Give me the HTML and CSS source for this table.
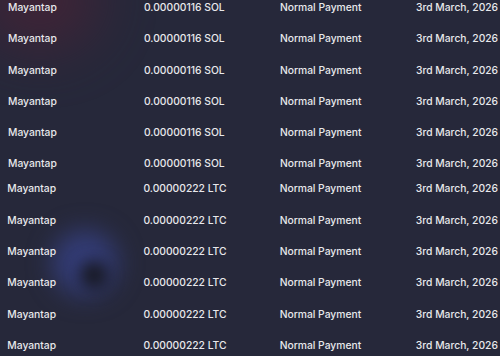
FILE: index.html
```html
<!doctype html>
<html lang="en">
  <head>
    <meta charset="UTF-8">
    <meta name="viewport" content="width=device-width, initial-scale=1.0">
    <title>Payments</title>
    <link rel="stylesheet" href="styles.css">
  </head>
  <body>
    <div class="glow glow-red"></div>
    <div class="glow glow-blue"></div>
    <div class="glow glow-dark"></div>

    <main class="history">
      <ul class="tx-list">
        <li class="tx"><span>Mayantap</span><span>0.00000116 SOL</span><span>Normal Payment</span><span>3rd March, 2026</span></li>
        <li class="tx"><span>Mayantap</span><span>0.00000116 SOL</span><span>Normal Payment</span><span>3rd March, 2026</span></li>
        <li class="tx"><span>Mayantap</span><span>0.00000116 SOL</span><span>Normal Payment</span><span>3rd March, 2026</span></li>
        <li class="tx"><span>Mayantap</span><span>0.00000116 SOL</span><span>Normal Payment</span><span>3rd March, 2026</span></li>
        <li class="tx"><span>Mayantap</span><span>0.00000116 SOL</span><span>Normal Payment</span><span>3rd March, 2026</span></li>
        <li class="tx"><span>Mayantap</span><span>0.00000116 SOL</span><span>Normal Payment</span><span>3rd March, 2026</span></li>
      </ul>

      <ul class="tx-list tx-list-ltc">
        <li class="tx"><span>Mayantap</span><span>0.00000222 LTC</span><span>Normal Payment</span><span>3rd March, 2026</span></li>
        <li class="tx"><span>Mayantap</span><span>0.00000222 LTC</span><span>Normal Payment</span><span>3rd March, 2026</span></li>
        <li class="tx"><span>Mayantap</span><span>0.00000222 LTC</span><span>Normal Payment</span><span>3rd March, 2026</span></li>
        <li class="tx"><span>Mayantap</span><span>0.00000222 LTC</span><span>Normal Payment</span><span>3rd March, 2026</span></li>
        <li class="tx"><span>Mayantap</span><span>0.00000222 LTC</span><span>Normal Payment</span><span>3rd March, 2026</span></li>
        <li class="tx"><span>Mayantap</span><span>0.00000222 LTC</span><span>Normal Payment</span><span>3rd March, 2026</span></li>
      </ul>
    </main>
  </body>
</html>
```

FILE: styles.css
```css
html,
body {
  margin: 0;
  height: 100%;
}

body {
  position: relative;
  overflow: hidden;
  background: #26283a;
  color: #e8e8ec;
  font-family: Inter, "Noto Sans", sans-serif;
  font-size: 10.3px;
  font-weight: 500;
}

/* background blurs */
.glow {
  position: absolute;
  border-radius: 50%;
  pointer-events: none;
}

.glow-red {
  left: -20px;
  top: -50px;
  width: 120px;
  height: 100px;
  background: #4a2235;
  filter: blur(28px);
  opacity: 0.7;
}

.glow-blue {
  left: 52px;
  top: 230px;
  width: 66px;
  height: 66px;
  background: #333c76;
  filter: blur(12px);
}

.glow-dark {
  left: 80px;
  top: 261px;
  width: 28px;
  height: 28px;
  background: #181922;
  filter: blur(8px);
}

.history {
  position: relative;
  display: flex;
  flex-direction: column;
  gap: 10px;
}

.tx-list {
  list-style: none;
  margin: 0;
  padding: 0 8px;
  display: flex;
  flex-direction: column;
  gap: 16.3px;
}

.tx-list-ltc {
  padding-left: 7.3px;
}

.tx {
  display: grid;
  grid-template-columns: repeat(4, minmax(0, 1fr));
  column-gap: 60px;
  line-height: 15px;
  white-space: nowrap;
}
```
